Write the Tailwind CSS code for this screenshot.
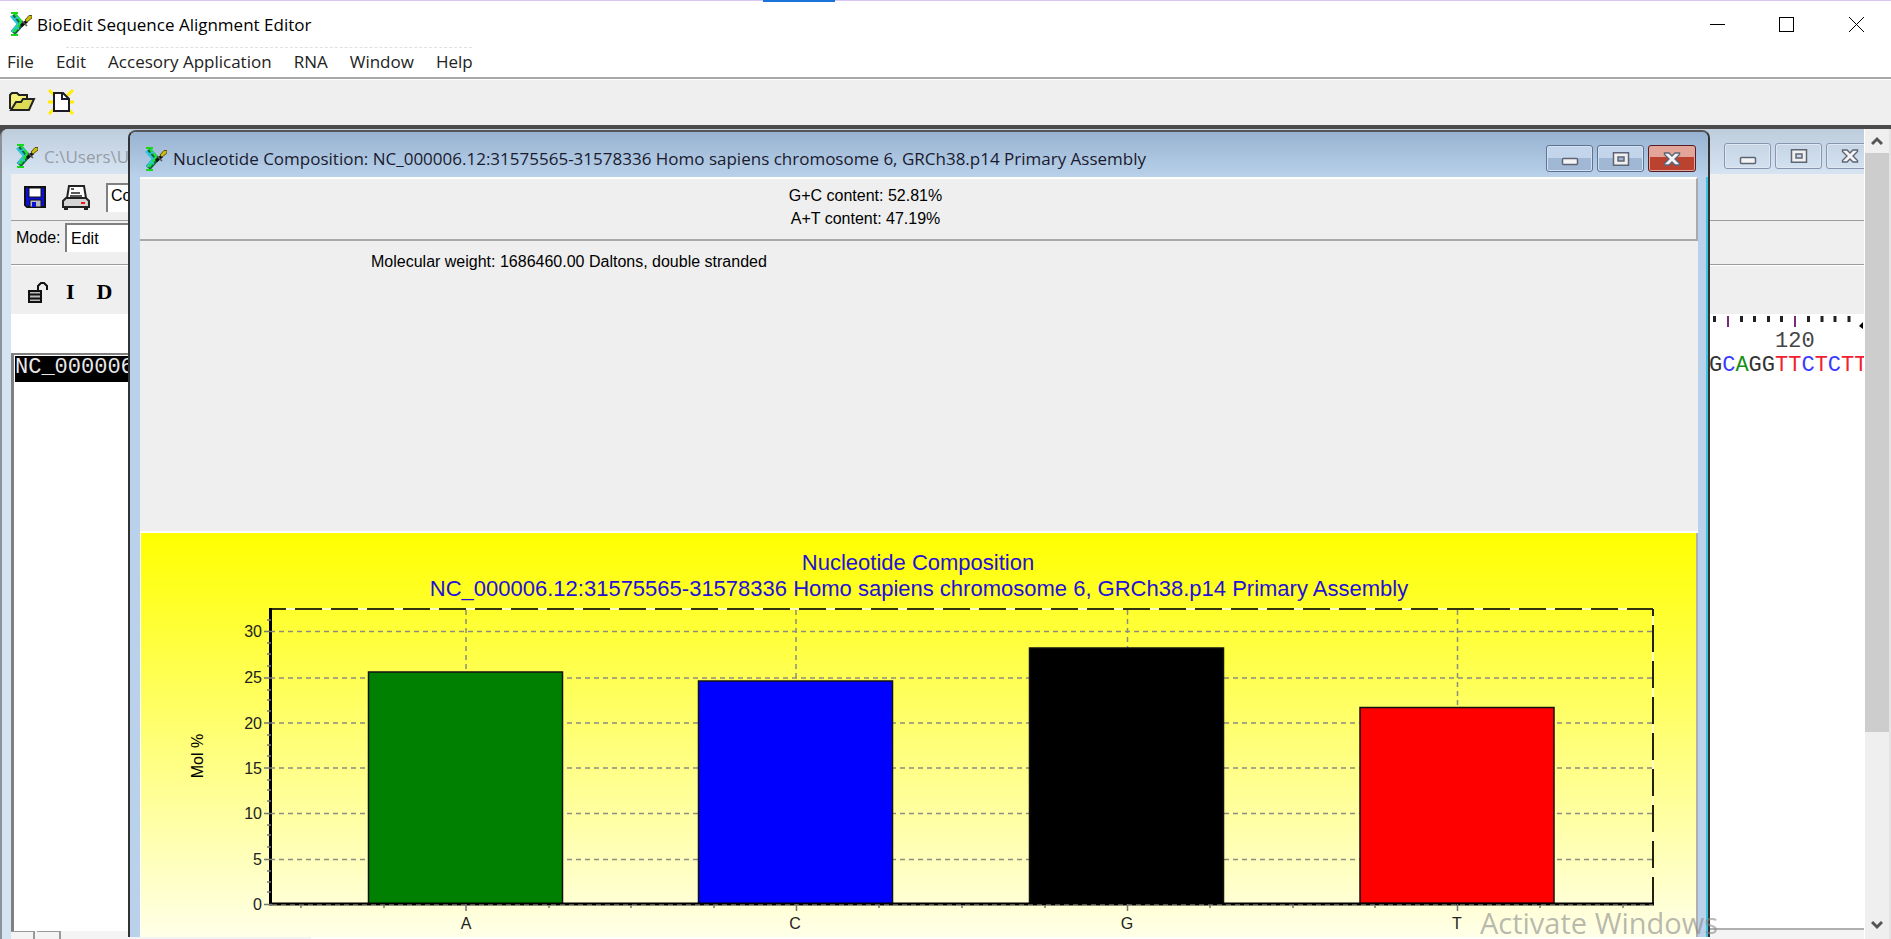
<!DOCTYPE html>
<html lang="en">
<head>
<meta charset="utf-8">
<title>BioEdit Sequence Alignment Editor</title>
<script src="https://cdn.jsdelivr.net/npm/@tailwindcss/browser@4"></script>
</head>
<body class="flex h-screen flex-col overflow-hidden bg-[#efefef] font-['Liberation_Sans',sans-serif] text-base leading-5 text-black">

<!-- Shared icon shapes -->
<svg class="hidden" aria-hidden="true">
  <symbol id="logo" viewBox="0 0 22 24">
    <path d="M3 3 L11 12 L3 21" fill="none" stroke="#14603c" stroke-width="6"/>
    <path d="M1 4 L8 12 L2 20" fill="none" stroke="#2fc6dc" stroke-width="2.500"/>
    <path d="M5 2 L11 9 L10 12 L4 20" fill="none" stroke="#1be03a" stroke-width="2.500"/>
    <path d="M4 7 L9 5 M5 15 L9 17" stroke="#2fc6dc" stroke-width="1.500"/>
    <path d="M1 1 H8 M1 23 H8" stroke="#18d818" stroke-width="2"/>
    <path d="M11 14 L17 9" stroke="#111" stroke-width="3"/>
    <path d="M12 9 L17 14" stroke="#555" stroke-width="1.500"/>
    <path d="M15 8 L19 3.500 H22 V6 L17 10 Z" fill="#cdbb0e" stroke="#5b5410" stroke-width="1"/>
  </symbol>
  <symbol id="min" viewBox="0 0 18 14"><rect x="1.500" y="6.500" width="15" height="6" rx="1" fill="#f4f4f4" stroke="#5d6475" stroke-width="1.500"/></symbol>
  <symbol id="max" viewBox="0 0 18 14"><path d="M1.500 .8 H16.500 V13.200 H1.500 Z M6 5 V9 H12 V5 Z" fill="#f0f0f0" fill-rule="evenodd" stroke="#5d6475" stroke-width="1.500"/></symbol>
  <symbol id="cls" viewBox="0 0 18 14"><path d="M1.500 1 H6 L9 4 L12 1 H16.500 V2.500 L12 7 L16.500 11.500 V13 H12 L9 10 L6 13 H1.500 V11.500 L6 7 L1.500 2.500 Z" fill="#f4f4f4" stroke="#5d6475" stroke-width="1.400"/></symbol>
</svg>

<!-- Application title bar -->
<header class="relative flex h-[47px] shrink-0 items-center border-t border-[#d9c6f2] bg-white pl-[10px] font-['Open_Sans',sans-serif]">
  <div class="absolute -top-px left-[763px] h-[2px] w-[72px] bg-[#1a73d9]"></div>
  <svg class="h-6 w-[22px]"><use href="#logo"/></svg>
  <h1 class="ml-[5px] pt-px text-[17px]">BioEdit Sequence Alignment Editor</h1>
  <div class="ml-auto flex h-full">
    <button aria-label="Minimize" class="flex w-[69px] items-center justify-center"><svg width="15" height="15" viewBox="0 0 15 15"><path d="M0 7.500 H15" stroke="#000"/></svg></button>
    <button aria-label="Maximize" class="flex w-[69px] items-center justify-center"><svg width="15" height="15" viewBox="0 0 15 15"><rect x=".5" y=".5" width="14" height="14" fill="none" stroke="#000"/></svg></button>
    <button aria-label="Close" class="mr-[-1px] flex w-[71px] items-center justify-center"><svg width="15" height="15" viewBox="0 0 15 15"><path d="M0 0 L15 15 M15 0 L0 15" stroke="#000"/></svg></button>
  </div>
</header>

<!-- Menu -->
<nav class="relative flex h-[30px] shrink-0 items-center gap-[22px] bg-white pl-[7px] font-['Open_Sans',sans-serif] text-[17px] text-[#222]">
  <div class="absolute top-0 left-[66px] w-[406px] border-t border-dashed border-[#e0e0e0]"></div>
  <button>File</button><button>Edit</button><button>Accesory Application</button><button>RNA</button><button>Window</button><button>Help</button>
</nav>

<!-- Toolbar -->
<div class="flex h-12 shrink-0 items-center gap-3 border-t-2 border-[#a9a9a9] bg-[#efefef] pl-[9px] shadow-[inset_0_1px_0_#fff]">
  <button aria-label="Open"><svg width="27" height="20" viewBox="0 0 27 20"><path d="M1 17 V3 L3 1 H8 L10 3 H18 V7" fill="#f4f07a" stroke="#222" stroke-width="2"/><path d="M2 18 L7 10 L12 10 L14 7 H25 L20 18 Z" fill="#dedb55" stroke="#222" stroke-width="2"/></svg></button>
  <button aria-label="New"><svg width="26" height="26" viewBox="0 0 26 26"><path d="M1 1 L25 25 M25 1 L1 25 M0 13 H26" stroke="#ffee00" stroke-width="3"/><path d="M6 4 H15 L21 10 V22 H6 Z" fill="#fff" stroke="#1b1b2a" stroke-width="2"/><path d="M14 4 V10 H21" fill="none" stroke="#1b1b2a" stroke-width="2"/></svg></button>
</div>

<!-- MDI desktop -->
<main class="flex min-h-0 flex-1 border-t-4 border-[#4b4b4b]">
  <div class="relative min-w-0 flex-1 overflow-hidden bg-[#4b4b4b]">

    <!-- Sequence window -->
    <section class="flex h-full flex-col rounded-tl-lg border-l-2 border-[#8b9299] bg-[#d6e4f1] pl-[9px]">
      <div class="-ml-[9px] flex h-[45px] shrink-0 items-center rounded-tl-md bg-linear-to-b from-[#becddc] to-[#d6e4f2] pt-2 pl-[14px]">
        <svg class="h-6 w-[22px]"><use href="#logo"/></svg>
        <h2 class="ml-[6px] pt-[2px] font-['Open_Sans',sans-serif] text-[17px] whitespace-nowrap text-[#979da6]">C:\Users\U</h2>
        <div class="-mr-[9px] ml-auto flex gap-1">
          <button aria-label="Minimize" class="flex h-[26px] w-[47px] items-center justify-center rounded-[3px] border border-[#8a96b0] pt-1 shadow-[inset_0_0_0_1px_#dfe8f2]"><svg class="h-[14px] w-[18px]"><use href="#min"/></svg></button>
          <button aria-label="Maximize" class="flex h-[26px] w-[47px] items-center justify-center rounded-[3px] border border-[#8a96b0] shadow-[inset_0_0_0_1px_#dfe8f2]"><svg class="h-[14px] w-[18px]"><use href="#max"/></svg></button>
          <button aria-label="Close" class="flex h-[26px] w-[47px] items-center justify-center rounded-[3px] border border-[#8a96b0] shadow-[inset_0_0_0_1px_#dfe8f2]"><svg class="h-[14px] w-[18px]"><use href="#cls"/></svg></button>
        </div>
      </div>
      <div class="flex h-[47px] shrink-0 items-center border-b border-[#9c9c9c] bg-[#efefef] pl-[13px]">
        <button aria-label="Save"><svg width="22" height="22" viewBox="0 0 22 22"><path d="M1 1 H21 V21 H3 L1 19 Z" fill="#0a10d8" stroke="#111" stroke-width="2"/><rect x="5" y="2" width="12" height="9" fill="#fff" stroke="#111"/><rect x="6" y="14" width="11" height="7" fill="#bbb" stroke="#111"/><rect x="8" y="16" width="4" height="5" fill="#0a10d8"/></svg></button>
        <button aria-label="Print" class="ml-4"><svg width="28" height="25" viewBox="0 0 28 25"><path d="M5 13 L7 1 H22 L24 13" fill="#fff" stroke="#222" stroke-width="2"/><path d="M9 4 H12 M9 8 H18 M8 11 H20" stroke="#222" stroke-width="1.500"/><path d="M4 13 H24 L27 16 V22 H1 V16 Z" fill="#d4d4d4" stroke="#222" stroke-width="2"/><path d="M19 18 H23" stroke="#f01818" stroke-width="2"/><path d="M2 24 H6 M22 24 H26" stroke="#222" stroke-width="2"/></svg></button>
        <select aria-label="Font" class="ml-4 h-[29px] w-40 appearance-none border-t-2 border-l-2 border-[#808080] bg-white pb-1 pl-[3px]"><option>Courier New</option></select>
      </div>
      <div class="flex h-11 shrink-0 items-start border-b border-[#9c9c9c] bg-[#efefef] pt-[2px] pl-[5px]">
        <label for="mode" class="w-[49px] pt-[5px]">Mode:</label>
        <select id="mode" class="h-[29px] w-40 appearance-none border-t-2 border-l-2 border-[#808080] bg-white pl-1"><option>Edit</option></select>
      </div>
      <div class="flex h-[49px] shrink-0 items-center border-t border-white bg-[#efefef] pt-1 pl-[17px] font-['Liberation_Serif',serif] text-[22px] font-bold">
        <button aria-label="Unlock"><svg width="20" height="21" viewBox="0 0 20 21"><path d="M10 9 V4 L13 1 H16 L19 4 V8" fill="none" stroke="#111" stroke-width="2"/><rect x="1" y="9" width="12" height="11" fill="#bbb" stroke="#111" stroke-width="2"/><path d="M1 12.500 H13 M1 16.500 H13" stroke="#111" stroke-width="2"/></svg></button>
        <button class="ml-[18px]">I</button>
        <button class="ml-[22px]">D</button>
      </div>
      <div class="flex min-h-0 flex-1 bg-white font-['Liberation_Mono',monospace] text-[22px] leading-6">
        <div class="flex w-[300px] flex-col">
          <div class="h-[39px] shrink-0"></div>
          <div class="flex-1 border-t-2 border-l-[3px] border-[#808080]">
            <div class="mt-px ml-px h-[26px] overflow-hidden bg-black text-[#e8e8e8]">NC_000006</div>
          </div>
          <div class="flex h-2 shrink-0 gap-[2px] bg-[#f4f4f4]"><div class="w-6 border-t border-r-2 border-[#999]"></div><div class="w-6 border-t border-r-2 border-[#999]"></div></div>
        </div>
        <div class="ml-auto flex w-[155px] flex-col">
          <svg class="h-[16px] shrink-0 pt-[2px]" width="155" height="16" viewBox="0 0 155 14">
            <path d="M5.500 0 V6 M32.500 0 V6 M45.500 0 V6 M59.500 0 V6 M72.500 0 V6 M99.500 0 V6 M113 0 V6 M126 0 V6 M140 0 V6" stroke="#222" stroke-width="3"/>
            <path d="M19 0 V11 M86 0 V11" stroke="#7a2a7a" stroke-width="2"/>
            <path d="M154 6 L150 10 L154 13" fill="#000"/>
          </svg>
          <div class="pl-[66px] text-[#444]">120</div>
          <div class="whitespace-nowrap text-[#333]">G<span class="text-[#3a3aff]">C</span><span class="text-[#159015]">A</span>GG<span class="text-[#f02030]">TT</span><span class="text-[#3a3aff]">C</span><span class="text-[#f02030]">T</span><span class="text-[#3a3aff]">C</span><span class="text-[#f02030]">TT</span></div>
          <div class="mt-auto h-[11px] border-t-2 border-[#b0b0b0] bg-[#f4f4f4]"></div>
        </div>
      </div>
    </section>

    <!-- Nucleotide composition window -->
    <section class="absolute top-px right-[154px] bottom-[2px] left-32 flex flex-col rounded-t-lg border-x-2 border-t-2 border-[#333] border-t-[#555] bg-[#b9d1ea] px-[10px] shadow-[inset_-2px_0_0_#3cc3e0,inset_0_1px_0_#dfe9f3]">
      <div class="-mx-[10px] flex h-[45px] shrink-0 items-center rounded-t-md bg-linear-to-b from-[#98b3d1] to-[#b9d1ea] pt-2 pr-[12px] pl-[15px]">
        <svg class="h-6 w-[22px]"><use href="#logo"/></svg>
        <h2 class="ml-[6px] pt-px font-['Open_Sans',sans-serif] text-[17px] whitespace-nowrap text-[#1a1a2e]">Nucleotide Composition: NC_000006.12:31575565-31578336 Homo sapiens chromosome 6, GRCh38.p14 Primary Assembly</h2>
        <div class="ml-auto flex gap-1">
          <button aria-label="Minimize" class="flex h-[27px] w-[47px] items-center justify-center rounded-[3px] border border-[#5f7290] bg-linear-to-b from-[#c3d5ea] from-50% to-[#a0b8d4] to-50% pt-px shadow-[inset_0_0_0_1px_#d3e2f2]"><svg class="h-[14px] w-[18px]"><use href="#min"/></svg></button>
          <button aria-label="Maximize" class="flex h-[27px] w-[47px] items-center justify-center rounded-[3px] border border-[#5f7290] bg-linear-to-b from-[#c3d5ea] from-50% to-[#a0b8d4] to-50% shadow-[inset_0_0_0_1px_#d3e2f2]"><svg class="h-[14px] w-[18px]"><use href="#max"/></svg></button>
          <button aria-label="Close" class="flex h-[27px] w-[48px] items-center justify-center rounded-[3px] border border-[#5a1a22] bg-linear-to-b from-[#e3a49a] from-45% to-[#bc4230] to-45% shadow-[inset_0_0_0_1px_#e0a79f]"><svg class="h-[14px] w-[18px]"><use href="#cls"/></svg></button>
        </div>
      </div>
      <div class="flex h-16 shrink-0 flex-col items-center gap-[3px] border-t-2 border-r-2 border-b-2 border-t-white border-r-[#a9a9a9] border-b-[#a9a9a9] bg-[#efefef] pt-[7px] pr-[105px]">
        <p>G+C content: 52.81%</p>
        <p>A+T content: 47.19%</p>
      </div>
      <div class="h-[292px] shrink-0 border-b-2 border-white bg-[#efefef] pt-[11px] pl-[231px]">Molecular weight: 1686460.00 Daltons, double stranded</div>

      <figure class="min-h-0 flex-1 overflow-hidden border-r-2 border-l border-r-[#b0b0b0] border-l-white bg-linear-to-b/srgb from-[#ffff00] to-[#ffffe8]">
        <svg class="block w-full" viewBox="141 533 1555 404" role="img" aria-label="Nucleotide composition bar chart" font-family="Liberation Sans, sans-serif" font-size="16">
          <g fill="#2410d8" font-size="22" text-anchor="middle">
            <text x="918" y="570">Nucleotide Composition</text>
            <text x="919" y="596">NC_000006.12:31575565-31578336 Homo sapiens chromosome 6, GRCh38.p14 Primary Assembly</text>
          </g>
          <g stroke="#8c8c80" stroke-width="1.500" stroke-dasharray="5 4" fill="none">
            <path d="M270 631.500 H1653 M270 678 H1653 M270 723 H1653 M270 768 H1653 M270 813.500 H1653 M270 859.500 H1653"/>
            <path d="M466 610 V672 M796 610 V681 M1127.500 610 V648 M1457.500 610 V707"/>
          </g>
          <path d="M270 609 H1653 V904" fill="none" stroke="#fffcc0" stroke-width="2"/>
          <path d="M271 609 H1653" stroke="#33330c" stroke-width="2" stroke-dasharray="27 9" stroke-dashoffset="12"/>
          <path d="M1653 609 V904" stroke="#22220c" stroke-width="2" stroke-dasharray="27 9" stroke-dashoffset="20"/>
          <g stroke="#111" stroke-width="1.500">
            <rect x="368.500" y="672" width="194" height="232" fill="#008000"/>
            <rect x="698.500" y="681" width="194" height="223" fill="#0000ff"/>
            <rect x="1029.500" y="648" width="194" height="256" fill="#000"/>
            <rect x="1360" y="707.500" width="194" height="196" fill="#ff0000"/>
          </g>
          <path d="M270.500 608 V905 M269 904 H1654" stroke="#000" stroke-width="3" fill="none"/>
          <path d="M272 905 H1653" stroke="#a8a890" stroke-dasharray="5 4"/>
          <g stroke="#777" stroke-width="1.500">
            <path d="M264 631.500 H272 M264 678 H272 M264 723 H272 M264 768 H272 M264 813.500 H272 M264 859.500 H272 M264 904.500 H272"/>
            <path d="M267 620 H271 M267 643 H271 M267 654 H271 M267 666 H271 M267 690 H271 M267 700 H271 M267 711 H271 M267 735 H271 M267 745 H271 M267 756 H271 M267 780 H271 M267 790 H271 M267 801 H271 M267 825 H271 M267 835 H271 M267 847 H271 M267 871 H271 M267 882 H271 M267 892 H271"/>
            <path d="M466 904 V911 M796.500 904 V911 M1127.500 904 V911 M1457.500 904 V911"/>
            <path d="M301 905 V908 M384 905 V908 M549 905 V908 M631 905 V908 M714 905 V908 M879 905 V908 M962 905 V908 M1045 905 V908 M1210 905 V908 M1293 905 V908 M1375 905 V908 M1540 905 V908 M1623 905 V908"/>
          </g>
          <g fill="#222" text-anchor="end">
            <text x="262" y="637">30</text><text x="262" y="683">25</text><text x="262" y="729">20</text><text x="262" y="774">15</text><text x="262" y="819">10</text><text x="262" y="865">5</text><text x="262" y="910">0</text>
          </g>
          <g fill="#222" text-anchor="middle">
            <text x="466" y="929">A</text><text x="795" y="929">C</text><text x="1127" y="929">G</text><text x="1457" y="929">T</text>
            <text transform="translate(203 756) rotate(-90)" fill="#000">Mol %</text>
          </g>
        </svg>
      </figure>
    </section>

    <p class="absolute right-[146px] bottom-0 font-['Open_Sans',sans-serif] text-[29px] leading-8 whitespace-nowrap text-[#8a8a8a]/60">Activate Windows</p>
  </div>

  <!-- Vertical scroll bar -->
  <div class="flex w-[27px] shrink-0 flex-col border-r-2 border-l border-[#e4e4e4] border-l-white bg-[#efefef]" aria-label="Vertical scroll">
    <button aria-label="Scroll up" class="flex h-6 items-center justify-center"><svg width="12" height="10" viewBox="0 0 12 10"><path d="M1 8 L6 3 L11 8" fill="none" stroke="#555" stroke-width="3"/></svg></button>
    <div class="h-[579px] shrink-0 bg-[#cdcdcd]"></div>
    <button aria-label="Scroll down" class="mt-auto flex h-7 items-center justify-center"><svg width="12" height="10" viewBox="0 0 12 10"><path d="M1 2 L6 7 L11 2" fill="none" stroke="#555" stroke-width="3"/></svg></button>
  </div>
</main>
</body>
</html>
